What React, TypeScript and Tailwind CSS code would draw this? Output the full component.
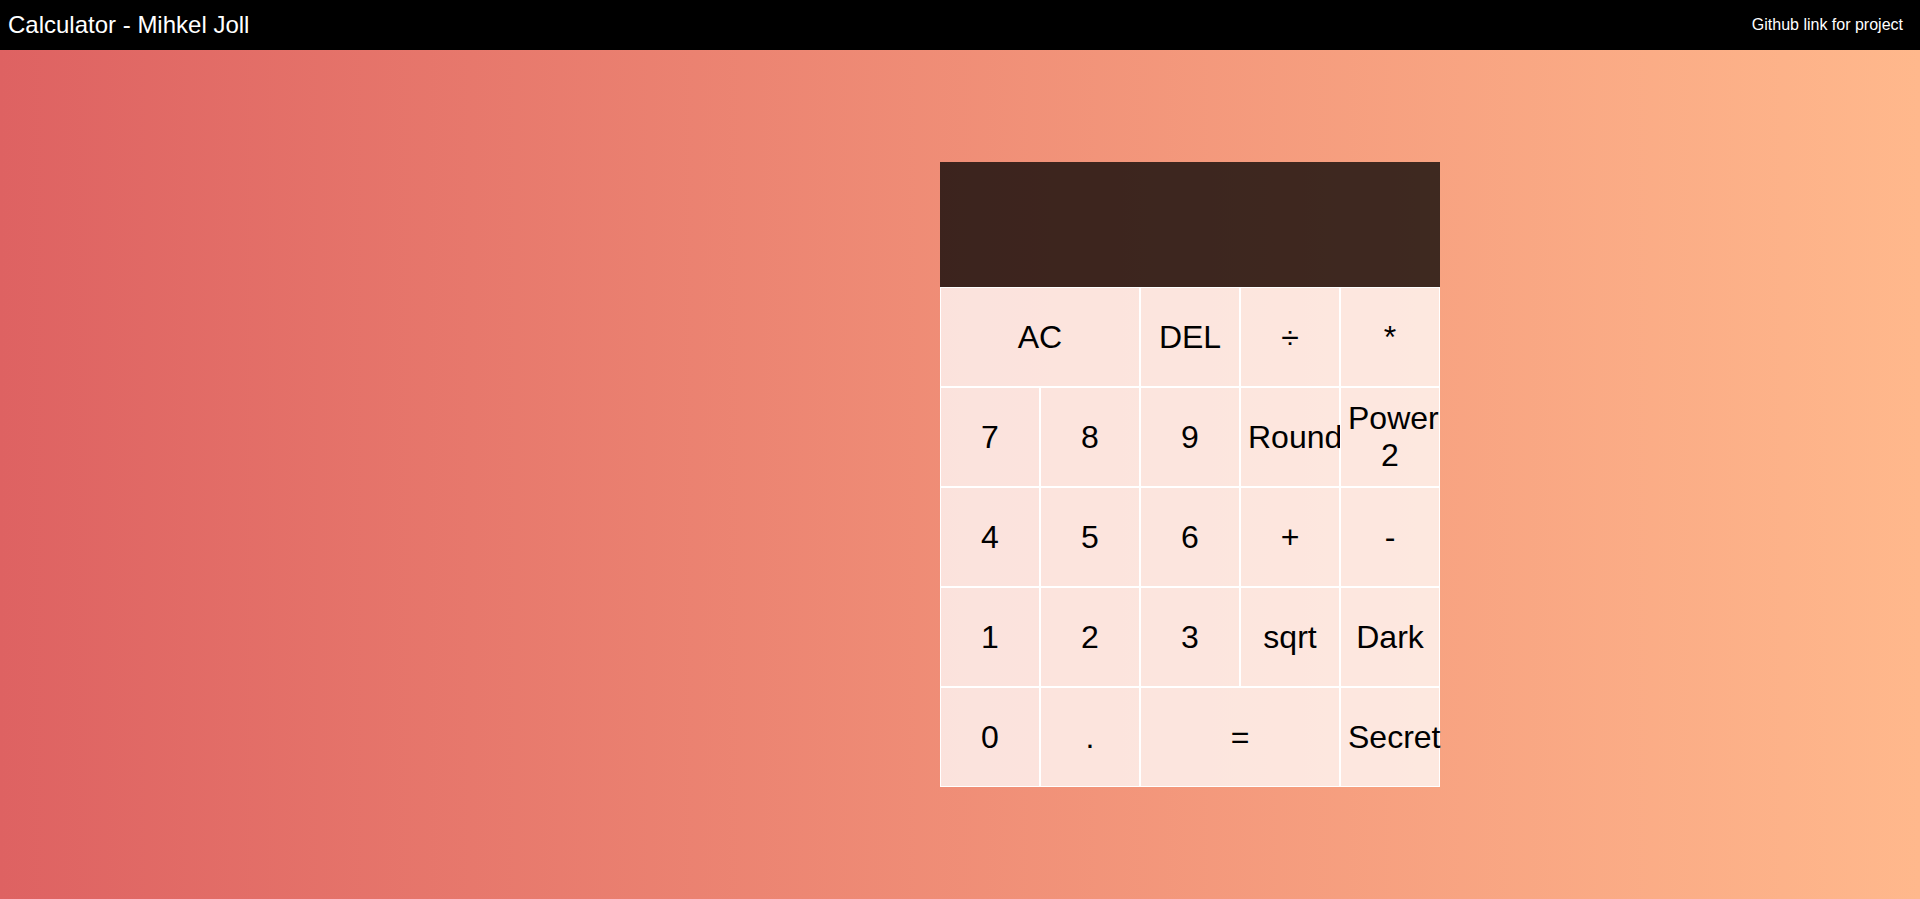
import React from "react";

const btn =
  "border border-white bg-[rgba(255,255,255,0.75)] text-black text-[32px] leading-[normal] px-[7px] py-px text-center cursor-pointer overflow-visible";

export default function App() {
  const keys: { label: string; span?: boolean }[] = [
    { label: "AC", span: true },
    { label: "DEL" },
    { label: "÷" },
    { label: "*" },
    { label: "7" },
    { label: "8" },
    { label: "9" },
    { label: "Round" },
    { label: "Power 2" },
    { label: "4" },
    { label: "5" },
    { label: "6" },
    { label: "+" },
    { label: "-" },
    { label: "1" },
    { label: "2" },
    { label: "3" },
    { label: "sqrt" },
    { label: "Dark" },
    { label: "0" },
    { label: "." },
    { label: "=", span: true },
    { label: "Secret" },
  ];
  return (
    <div
      className="min-h-screen w-full bg-gradient-to-r from-[#de6262] to-[#ffb88c]"
      style={{ fontFamily: '"Liberation Sans", Arial, sans-serif' }}
    >
      <header className="h-[50px] bg-black flex items-center justify-between pl-[8px] pr-[17px] text-white">
        <span className="text-[24px] leading-none">Calculator - Mihkel Joll</span>
        <a className="text-[16px] leading-none text-white">Github link for project</a>
      </header>
      <div className="pt-[112px] pl-[940px]">
        <div className="grid grid-cols-[repeat(5,100px)] grid-rows-[125px_repeat(5,100px)] w-[500px]">
          <div className="col-span-5 bg-[rgba(0,0,0,0.75)]" />
          {keys.map((k, i) => (
            <button key={i} className={k.span ? btn + " col-span-2" : btn}>
              {k.label}
            </button>
          ))}
        </div>
      </div>
    </div>
  );
}
